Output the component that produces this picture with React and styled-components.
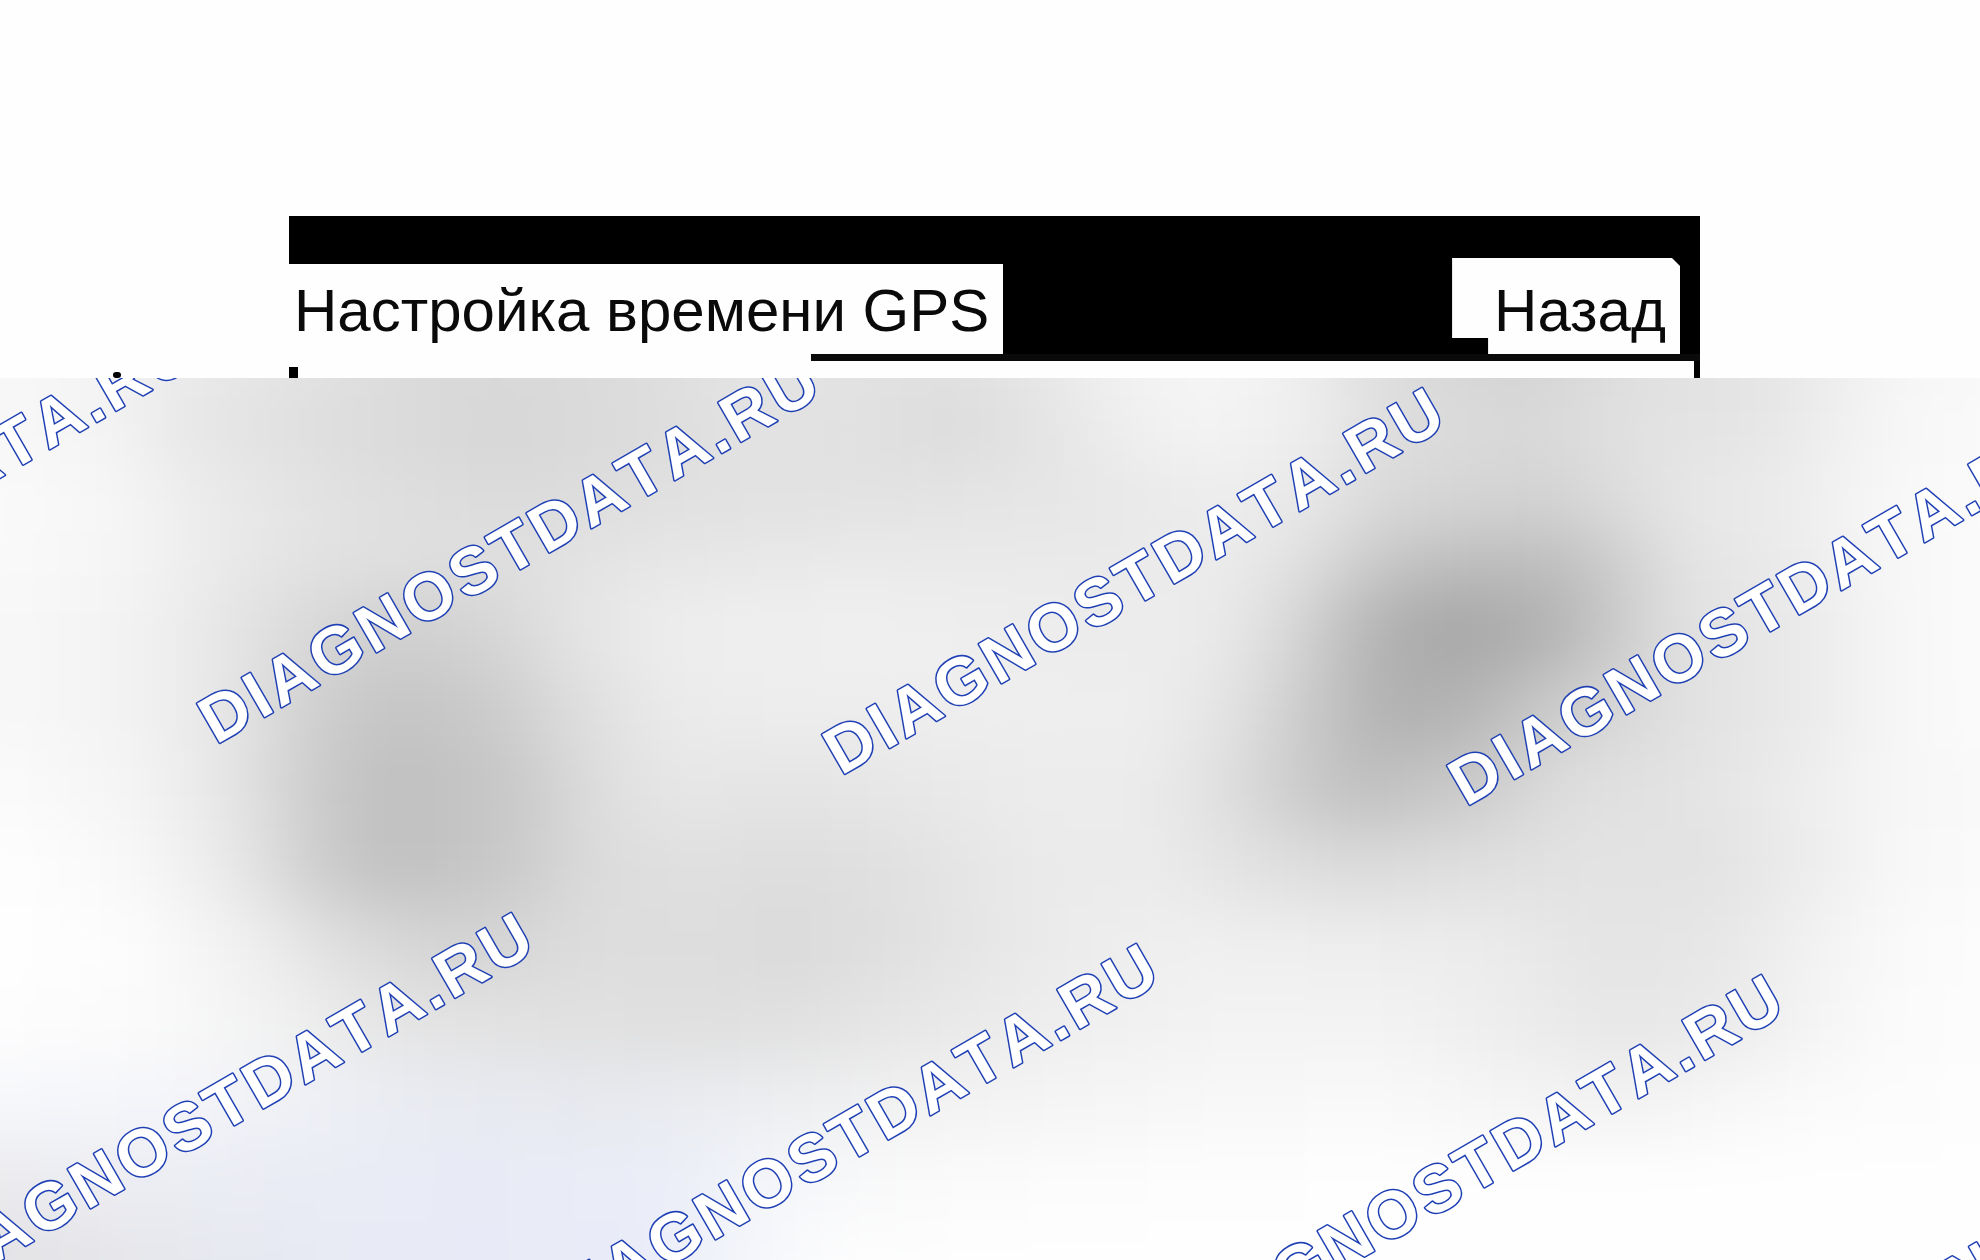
import React from "react";
import styled, { createGlobalStyle } from "styled-components";

const GlobalStyle = createGlobalStyle`
  * { box-sizing: border-box; }
  body { margin: 0; background: #fff; }
`;

const Page = styled.main`
  display: flex;
  flex-direction: column;
  min-height: 100vh;
  padding-top: 216px;
  overflow: hidden;
  background: #fefefe;
  color: #0a0a0a;
  font-family: "Liberation Sans", Arial, sans-serif;
`;

const Header = styled.header`
  margin: 0 280px 0 289px;
  background: #000;
`;

const TitleRow = styled.div`
  display: flex;
  justify-content: space-between;
  padding: 42px 20px 0 0;
`;

const Title = styled.h1`
  margin: 6px 0 0;
  padding: 4px 14px 0 5px;
  background: #fefefe;
  font-size: 60px;
  font-weight: 400;
  line-height: 86px;
  white-space: nowrap;
`;

const BackButton = styled.button`
  margin: 0;
  padding: 10px 14px 0 42px;
  border: 0;
  background: #fefefe;
  color: inherit;
  font-family: inherit;
  font-size: 60px;
  line-height: 86px;
  cursor: pointer;
  clip-path: polygon(
    0 0, calc(100% - 8px) 0, 100% 8px, 100% 100%,
    36px 100%, 36px 80px, 0 80px
  );
`;

const Rule = styled.div`
  height: 7px;
  background: linear-gradient(to right, #fefefe 37%, #0a0a0a 37%);
`;

const FrameStrip = styled.div`
  display: flex;
  align-items: flex-end;
  height: 17px;
  padding: 0 280px 0 113px;
`;

const Mark = styled.span`
  width: ${(p) => p.$width}px;
  height: ${(p) => p.$height}px;
  background: #000;
  border-radius: ${(p) => p.$round || 0}px;
`;

const Gap = styled.span`
  flex: ${(p) => (p.$width ? `0 0 ${p.$width}px` : "1")};
`;

const Preview = styled.section`
  position: relative;
  flex: 1;
  overflow: hidden;
`;

const Haze = styled.div`
  position: absolute;
  inset: -80px -100px;
  display: flex;
  flex-direction: column;
  filter: blur(30px);
`;

const Band = styled.div`
  flex: ${(p) => p.$grow} 0 0;
  background: linear-gradient(to right, ${(p) => p.$stops});
`;

const Watermark = styled.svg`
  position: absolute;
  inset: 0;
  width: 100%;
  height: 100%;

  text {
    fill: #fff;
    stroke: #1f40b4;
    stroke-width: 3px;
    stroke-linejoin: round;
    paint-order: stroke;
    font-family: "Liberation Sans", Arial, sans-serif;
    font-size: 66px;
    font-weight: 700;
    letter-spacing: 4px;
    font-kerning: none;
  }
`;

// Each band: relative height, then [position in %, colour] pairs.
const BANDS = [
  [100, "0 f8,6 f3,9 eb,16 e2,22 da,26 d9,32 dd,38 e4,43 e3,48 e0,52 e6,57 f2,61 f6,66 ee,70 dc,77 d3,83 e0,89 e4,93 ee,96 f6,100 f8"],
  [70, "0 f8,6 f3,9 e8,16 de,25 d6,32 db,38 e3,43 e1,48 dc,52 e2,57 ef,61 f4,66 ee,70 de,77 d8,83 e2,89 e6,93 f0,96 f7,100 fa"],
  [70, "0 fa,6 f6,10 ec,18 e0,26 db,35 e1,45 e3,55 e7,62 ed,66 e8,70 d8,78 d2,82 dd,85 e7,90 ec,95 f7,100 fb"],
  [60, "0 fa,7 f4,11 ea,16 e2,21 df,26 e0,32 e6,42 ea,55 ea,62 ec,66 df,70 c6,74 bc,79 be,82 cf,85 e3,90 ea,95 f6,100 fb"],
  [80, "0 f8,7 f2,12 e4,16 d7,20 cf,25 d5,29 e4,34 ee,44 f0,55 ec,61 ec,65 da,69 b6,73 a6,78 b0,81 c6,85 e1,91 ea,96 f7,100 fb"],
  [80, "0 f8,7 f2,12 e4,16 ce,20 c4,25 cb,29 dd,34 eb,40 ed,50 ee,58 ee,62 e4,66 ca,70 b0,74 b4,79 cf,85 e1,91 ea,96 f7,100 fb"],
  [80, "0 fb,7 f4,12 e4,16 cb,20 be,26 c8,30 dd,34 e7,39 e4,45 e7,52 ec,58 ec,62 de,66 c9,69 bf,74 ca,79 de,86 e4,91 ed,96 f7,100 f9"],
  [80, "0 fe,7 f8,12 e8,16 cd,20 c0,26 ca,30 dc,36 e0,39 dd,45 e0,52 ea,58 ec,63 e2,68 db,73 de,80 e3,87 e3,92 ee,96 f8,100 fa"],
  [80, "0 fe,7 fc,13 ef,18 dc,23 d3,30 dd,36 dd,40 da,46 e1,53 eb,60 f0,68 ee,75 ec,81 e4,87 e7,92 f3,96 fa,100 fc"],
  [80, "0 fd,8 fa,15 f0,20 e5,28 e1,35 e0,40 e1,46 e7,54 ef,62 f3,70 f3,76 ed,82 e7,87 eb,92 f5,96 fb,100 fc"],
  [80, "0 f6f7fb,8 f4f5fa,15 eff1f6,22 e9ebf2,30 e7e9ef,38 eceef1,46 f2,54 f5,62 f8,70 f9,76 f5,82 f2,87 f7,92 fb,100 fd"],
  [80, "0 ebebee,8 ecedf3,15 eaecf5,24 e8ebf6,34 ebeef8,39 f4f6fa,46 fa,54 fc,70 fe,100 fe"],
  [120, "0 e3e3e6,6 e6e6ea,12 e7e9f1,20 e8eaf6,32 e9ecf8,37 f2f4fa,42 fd,54 fe,70 fe,100 fe"],
];

const toStops = (text) =>
  text
    .split(",")
    .map((pair) => {
      const [at, hex] = pair.split(" ");
      const colour = hex.length === 2 ? hex.repeat(3) : hex;
      return `#${colour} calc(100px + (100% - 200px) * ${at} / 100)`;
    })
    .join(", ");

// The stamp repeats on a slanted lattice: one step per column, one per row.
const ORIGIN = { x: 216, y: 367 };
const COLUMN = { x: 625, y: 31 };
const ROW = { x: -286, y: 556 };
const stamps = [];
for (let row = 0; row < 2; row += 1) {
  for (let column = row - 1; column < row + 3; column += 1) {
    stamps.push({
      x: ORIGIN.x + column * COLUMN.x + row * ROW.x,
      y: ORIGIN.y + column * COLUMN.y + row * ROW.y,
    });
  }
}

export default function App() {
  return (
    <>
      <GlobalStyle />
      <Page>
        <Header>
          <TitleRow>
            <Title>Настройка времени GPS</Title>
            <BackButton type="button">Назад</BackButton>
          </TitleRow>
          <Rule />
        </Header>
        <FrameStrip>
          <Mark $width={8} $height={6} $round={3} />
          <Gap $width={168} />
          <Mark $width={9} $height={11} />
          <Gap />
          <Mark $width={6} $height={17} />
        </FrameStrip>
        <Preview>
          <Haze>
            {BANDS.map(([grow, stops], i) => (
              <Band key={i} $grow={grow} $stops={toStops(stops)} />
            ))}
          </Haze>
          <Watermark>
            {stamps.map(({ x, y }) => (
              <text key={`${x},${y}`} transform={`translate(${x} ${y}) rotate(-30)`}>
                DIAGNOSTDATA.RU
              </text>
            ))}
          </Watermark>
        </Preview>
      </Page>
    </>
  );
}
